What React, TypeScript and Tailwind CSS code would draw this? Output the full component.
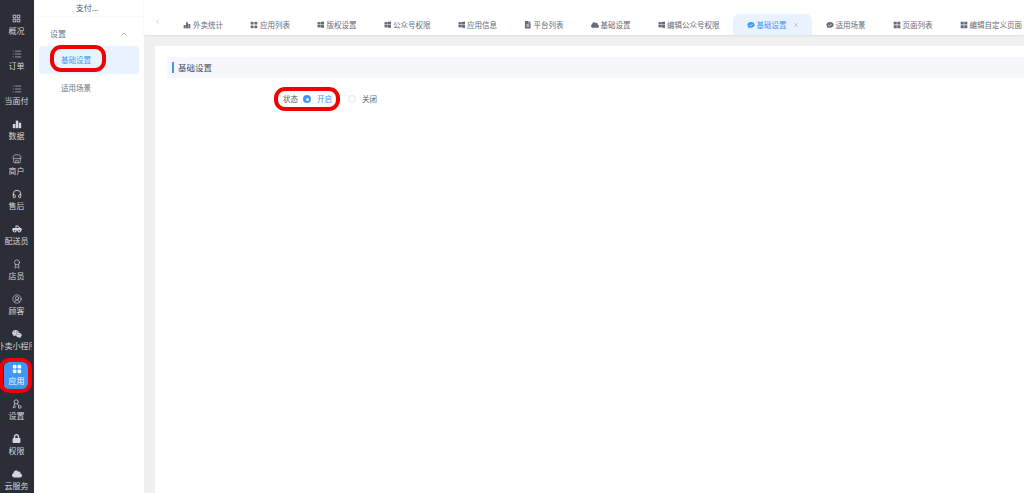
import React from 'react';
import { Award, ChevronLeft, ChevronUp, Headphones, List, Store, CircleUserRound, X } from 'lucide-react';
import { FaWeixin, FaWindows, FaCloud, FaLock, FaFileAlt, FaTruckPickup } from 'react-icons/fa';

type IconProps = { className?: string };

function BarsIcon({ className }: IconProps) {
  return (
    <svg viewBox="0 0 12 12" className={className} fill="currentColor">
      <rect x="1" y="6" width="3" height="5" />
      <rect x="4.5" y="2" width="3" height="9" />
      <rect x="8" y="4.5" width="3" height="6.5" />
    </svg>
  );
}

function DotsIcon({ className }: IconProps) {
  return (
    <svg viewBox="0 0 12 12" className={className} fill="currentColor">
      <rect x="1" y="1" width="4.4" height="4.4" rx="1.4" />
      <rect x="6.6" y="1" width="4.4" height="4.4" rx="1.4" />
      <rect x="1" y="6.6" width="4.4" height="4.4" rx="1.4" />
      <rect x="6.6" y="6.6" width="4.4" height="4.4" rx="1.4" />
    </svg>
  );
}

function OutlineGridIcon({ className }: IconProps) {
  return (
    <svg viewBox="0 0 12 12" className={className} fill="none" stroke="currentColor" strokeWidth="1">
      <rect x="1.5" y="1.5" width="3.6" height="3.6" />
      <rect x="6.9" y="1.5" width="3.6" height="3.6" />
      <rect x="1.5" y="6.9" width="3.6" height="3.6" />
      <rect x="6.9" y="6.9" width="3.6" height="3.6" />
    </svg>
  );
}

function PageIcon({ className }: IconProps) {
  return (
    <svg viewBox="0 0 12 12" className={className} fill="currentColor">
      <path d="M1 1h4.6v4.4H1zM6.4 1H11v4.4H6.4zM1 6.2h4.6V11H1zM6.4 6.2H11V11H6.4z" />
    </svg>
  );
}

function CheckBlobIcon({ className }: IconProps) {
  return (
    <svg viewBox="0 0 12 12" className={className}>
      <path d="M6 1.5c3 0 5.5 1.8 5.5 4.3S9 10.2 6 10.2c-.8 0-1.6-.1-2.3-.4L1.5 11l.4-2.2C1 8 .5 7 .5 5.8.5 3.3 3 1.5 6 1.5z" fill="currentColor" />
      <path d="M3.6 6l1.8 1.5 3-3" fill="none" stroke="white" strokeWidth="1.1" />
    </svg>
  );
}

function MedalGearIcon({ className }: IconProps) {
  return (
    <svg viewBox="0 0 12 12" className={className} fill="none" stroke="currentColor" strokeWidth="1">
      <circle cx="5" cy="3.5" r="2.5" />
      <path d="M3.4 5.6L1.5 10.5 5 9M6.6 5.6L8 8" />
      <circle cx="9.3" cy="9.5" r="1.6" />
    </svg>
  );
}

const sideItems = [
  { label: '概况', icon: <OutlineGridIcon className="w-[9px] h-[9px]" /> },
  { label: '订单', icon: <List className="w-[10px] h-[10px]" strokeWidth={1.5} /> },
  { label: '当面付', icon: <List className="w-[10px] h-[10px]" strokeWidth={1.5} /> },
  { label: '数据', icon: <BarsIcon className="w-[10px] h-[10px]" /> },
  { label: '商户', icon: <Store className="w-[10px] h-[10px]" strokeWidth={1.6} /> },
  { label: '售后', icon: <Headphones className="w-[10px] h-[10px]" strokeWidth={2.2} /> },
  { label: '配送员', icon: <FaTruckPickup className="w-[10px] h-[10px]" /> },
  { label: '店员', icon: <Award className="w-[10px] h-[10px]" strokeWidth={1.6} /> },
  { label: '顾客', icon: <CircleUserRound className="w-[10px] h-[10px]" strokeWidth={1.5} /> },
  { label: '外卖小程序', icon: <FaWeixin className="w-[10px] h-[10px]" /> },
  { label: '应用', icon: <DotsIcon className="w-[10px] h-[10px]" />, active: true },
  { label: '设置', icon: <MedalGearIcon className="w-[10px] h-[10px]" /> },
  { label: '权限', icon: <FaLock className="w-[9px] h-[9px]" /> },
  { label: '云服务', icon: <FaCloud className="w-[10px] h-[10px]" /> },
];

const tabs = [
  { label: '外卖统计', icon: <BarsIcon className="w-[8px] h-[8px]" /> },
  { label: '应用列表', icon: <DotsIcon className="w-[8px] h-[8px]" /> },
  { label: '版权设置', icon: <FaWindows className="w-[7.5px] h-[7.5px]" /> },
  { label: '公众号权限', icon: <FaWindows className="w-[7.5px] h-[7.5px]" /> },
  { label: '应用信息', icon: <FaWindows className="w-[7.5px] h-[7.5px]" /> },
  { label: '平台列表', icon: <FaFileAlt className="w-[7.5px] h-[7.5px]" /> },
  { label: '基础设置', icon: <FaCloud className="w-[8px] h-[8px]" /> },
  { label: '编辑公众号权限', icon: <FaWindows className="w-[7.5px] h-[7.5px]" /> },
  { label: '基础设置', icon: <CheckBlobIcon className="w-[8px] h-[8px]" />, active: true },
  { label: '适用场景', icon: <CheckBlobIcon className="w-[8px] h-[8px]" /> },
  { label: '页面列表', icon: <PageIcon className="w-[8px] h-[8px]" /> },
  { label: '编辑自定义页面', icon: <PageIcon className="w-[8px] h-[8px]" /> },
];

export default function App() {
  return (
    <div
      className="relative flex h-[493px] w-[1024px] overflow-hidden bg-[#f0f0f0] text-[7.5px]"
      style={{ fontFamily: '"Noto Sans CJK SC", "Noto Sans", sans-serif' }}
    >
      {/* Icon rail */}
      <aside className="w-[34px] shrink-0 overflow-hidden bg-[#2b2e37] pt-[12px] text-[#d3d5d9]">
        {sideItems.map((item) => (
          <div key={item.label} className="ml-[1px] flex h-[35px] w-[31px] items-start justify-center overflow-hidden">
            <div
              className={`flex h-[28px] w-[26px] shrink-0 flex-col items-center gap-[1px] rounded-[5px] ${
                item.active ? 'bg-[#3f96f8] text-white' : ''
              }`}
            >
              <span className="flex h-[13px] items-center">{item.icon}</span>
              <span className="whitespace-nowrap text-[8px] leading-[10px]">{item.label}</span>
            </div>
          </div>
        ))}
      </aside>

      {/* Secondary menu */}
      <nav className="w-[110px] shrink-0 bg-white text-[#6f7480]">
        <div className="flex h-[17px] items-center justify-center border-b border-[#fafafa] pr-[4px] text-[8px] text-[#555]">
          支付...
        </div>
        <div className="mt-[8px] flex h-[17px] items-center justify-between px-[16px] text-[8px]">
          <span>设置</span>
          <ChevronUp className="h-[8px] w-[8px]" strokeWidth={1.5} />
        </div>
        <div className="mx-[5px] mt-[4px] flex h-[28px] w-[100px] items-center rounded-[3px] bg-[#e8f3ff] pl-[22px] text-[7.5px] text-[#3f96f8]">
          基础设置
        </div>
        <div className="mx-[5px] flex h-[28px] items-center pl-[22px] text-[7.5px]">适用场景</div>
      </nav>

      {/* Main */}
      <main className="flex min-w-0 flex-1 flex-col">
        <header className="flex h-[35px] shrink-0 items-end bg-white shadow-[0_1px_2px_rgba(0,0,0,0.08)]">
          <div className="mb-[9px] flex w-[25.5px] shrink-0 justify-center pb-[1px] pl-[2px] text-[#9a9da5]">
            <ChevronLeft className="h-[7px] w-[7px]" strokeWidth={1.5} />
          </div>
          <div className="flex h-[21px] items-stretch whitespace-nowrap">
            {tabs.map((tab, i) => (
              <div
                key={i}
                className={`flex shrink-0 items-center gap-[2px] px-[13.5px] pt-[1px] ${
                  tab.active ? 'rounded-t-[6px] bg-[#e8f3ff] text-[#3f96f8]' : 'text-[#666b78]'
                }`}
              >
                {tab.icon}
                <span>{tab.label}</span>
                {tab.active && <X className="ml-[4px] h-[6px] w-[6px] text-[#8aa4c0]" strokeWidth={2} />}
              </div>
            ))}
          </div>
        </header>

        <section className="ml-[11px] mt-[11px] flex-1 bg-white pl-[12px] pt-[11px]">
          <div className="flex h-[21px] items-center bg-[#f5f7fa] pl-[5px]">
            <span className="mr-[4px] h-[11px] w-[2px] bg-[#3f96f8]" />
            <h2 className="text-[8.5px] font-normal text-[#4a4f5a]">基础设置</h2>
          </div>
          <div className="mt-[13px] flex h-[16px] items-center pl-[116px] text-[7.5px] text-[#555a66]">
            <span>状态</span>
            <span className="ml-[5px] flex h-[8px] w-[8px] items-center justify-center rounded-full bg-[#3f96f8]">
              <span className="h-[3px] w-[3px] rounded-full bg-white" />
            </span>
            <span className="ml-[6px] text-[#3f96f8]">开启</span>
            <span className="ml-[16px] h-[8px] w-[8px] rounded-full border border-[#e4e6ea] bg-white" />
            <span className="ml-[6px]">关闭</span>
          </div>
        </section>
      </main>

      {/* Red annotations drawn over the screenshot */}
      <div className="absolute left-[50px] top-[45px] h-[27px] w-[56px] rounded-[11px] border-4 border-[#f00000]" />
      <div className="absolute left-[274px] top-[87px] h-[24px] w-[66px] rounded-[11px] border-4 border-[#f00000]" />
      <div className="absolute left-[-1px] top-[358px] h-[35px] w-[33px] rounded-[10px] border-4 border-[#f00000]" />
    </div>
  );
}
